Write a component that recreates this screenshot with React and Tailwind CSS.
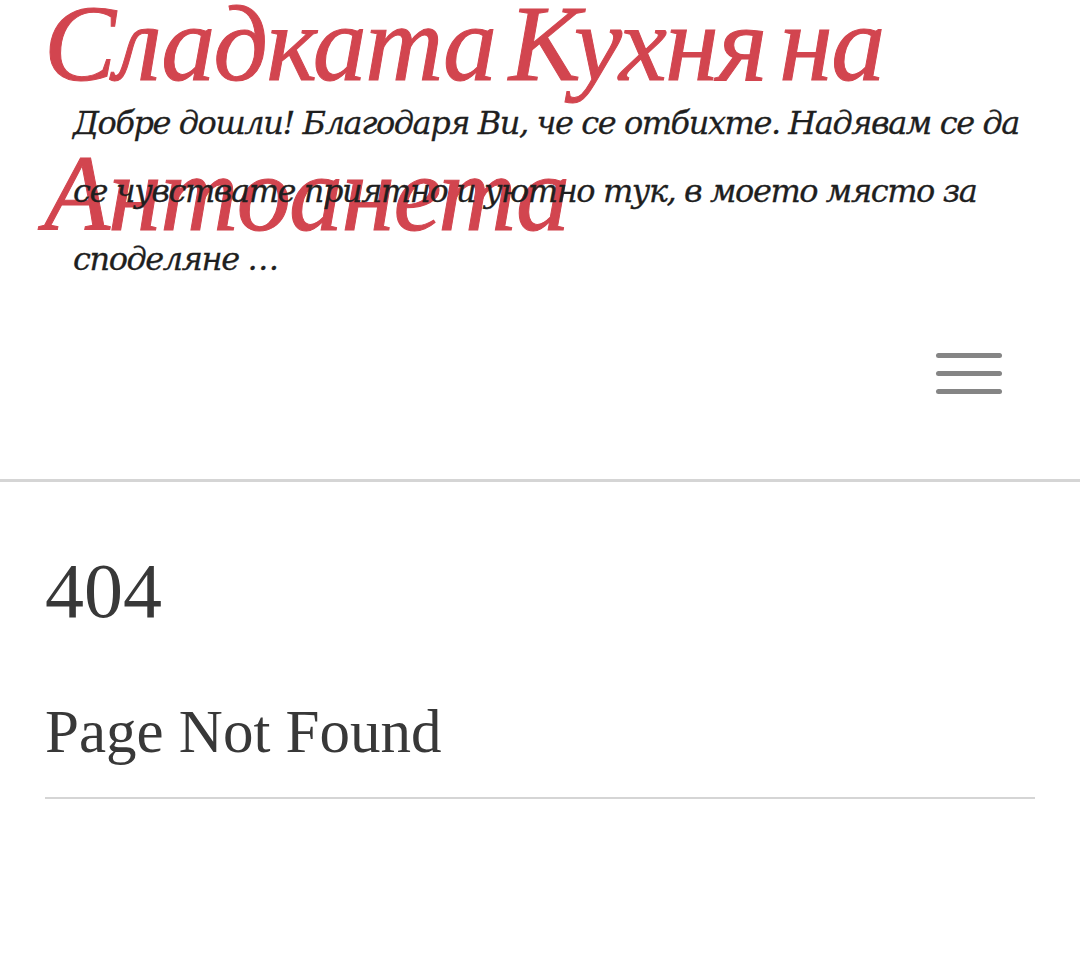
import React from 'react';

const App = () => {
  return (
    <div className="min-h-screen bg-white">
      {/* --- Header --- */}
      <header className="border-b-[3px] border-[#d5d5d5]">
        <div className="px-[44px]">
          <div className="h-[120px] -mt-[31px]">
            <h1 className="font-['Liberation_Serif',serif] italic text-[108px] leading-[150px] tracking-[-0.015em] [word-spacing:-12px] [-webkit-text-stroke:1px_#d2454f] text-[#d2454f] w-[920px]">
              Сладката Кухня на Антоанета
            </h1>
          </div>
          <p className="pl-[29px] font-['DejaVu_Serif',serif] italic text-[32px] leading-[68px] tracking-[-0.045em] [-webkit-text-stroke:0.3px_#1f1f1f] text-[#1f1f1f]">
            Добре дошли! Благодаря Ви, че се отбихте. Надявам се да се чувствате приятно и уютно тук, в моето място за споделяне …
          </p>
          <div className="flex justify-end pt-[60px] pb-[85px] pr-[34px]">
            <button className="w-[66px] flex flex-col gap-[13px]" aria-label="Menu">
              <span className="h-[5px] rounded-full bg-[#858585]"></span>
              <span className="h-[5px] rounded-full bg-[#858585]"></span>
              <span className="h-[5px] rounded-full bg-[#858585]"></span>
            </button>
          </div>
        </div>
      </header>

      {/* --- Content --- */}
      <main className="px-[45px] font-['Liberation_Serif',serif] text-[#383838]">
        <h2 className="mt-[62px] text-[78px] leading-[1.2]">404</h2>
        <h3 className="mt-[57px] text-[61px] leading-[1.2]">Page Not Found</h3>
        <div className="mt-[29px] h-[2px] bg-[#d5d5d5]"></div>
      </main>
    </div>
  );
};

export default App;
